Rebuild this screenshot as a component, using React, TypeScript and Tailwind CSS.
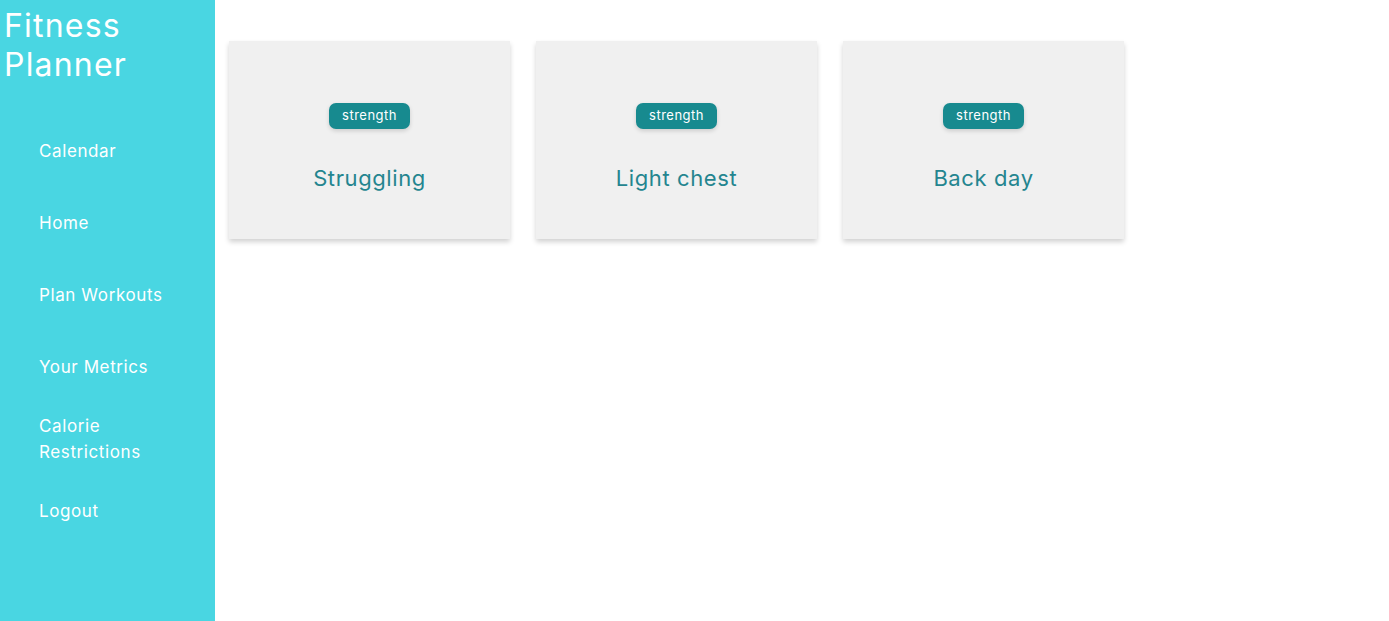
import React from 'react'

const navItems = ['Calendar', 'Home', 'Plan Workouts', 'Your Metrics', 'Calorie Restrictions', 'Logout']

const workouts = [
  { id: 1, name: 'Struggling', type: 'strength' },
  { id: 2, name: 'Light chest', type: 'strength' },
  { id: 3, name: 'Back day', type: 'strength' },
]

function WorkoutCard({ name, type }: { name: string; type: string }) {
  return (
    <div className="w-[281px] h-[198px] bg-[#f0f0f0] shadow-[0_3px_5px_rgba(0,0,0,0.18)] flex flex-col items-center pt-[62px]">
      <span className="h-[26px] px-[13px] flex items-center rounded-[7px] bg-[#178a8f] text-white text-[13px] tracking-[0.5px] shadow-[0_2px_4px_rgba(0,0,0,0.15)]">
        {type}
      </span>
      <h3 className="mt-[34px] text-[22px] leading-[30px] tracking-[0.6px] text-[#24858f]">{name}</h3>
    </div>
  )
}

export default function App() {
  return (
    <div
      className="flex h-[621px] w-full bg-white"
      style={{ fontFamily: 'Inter, "Noto Sans", sans-serif' }}
    >
      {/* sidebar */}
      <aside className="w-[215px] shrink-0 bg-[#49d6e2] text-white">
        <h1 className="pl-[4px] pt-[6px] text-[32px] leading-[39px] tracking-[1.2px]">
          Fitness
          <br />
          Planner
        </h1>
        <nav className="mt-[31px] flex flex-col">
          {navItems.map((item) => (
            <a key={item} className="h-[72px] flex items-center pl-[39px] pr-8 text-[17px] leading-[26px] tracking-[0.6px]">
              {item}
            </a>
          ))}
        </nav>
      </aside>

      {/* main */}
      <main className="flex-1 pl-[14px] pt-[41px]">
        <div className="flex gap-[26px]">
          {workouts.map((w) => (
            <WorkoutCard key={w.id} name={w.name} type={w.type} />
          ))}
        </div>
      </main>
    </div>
  )
}
